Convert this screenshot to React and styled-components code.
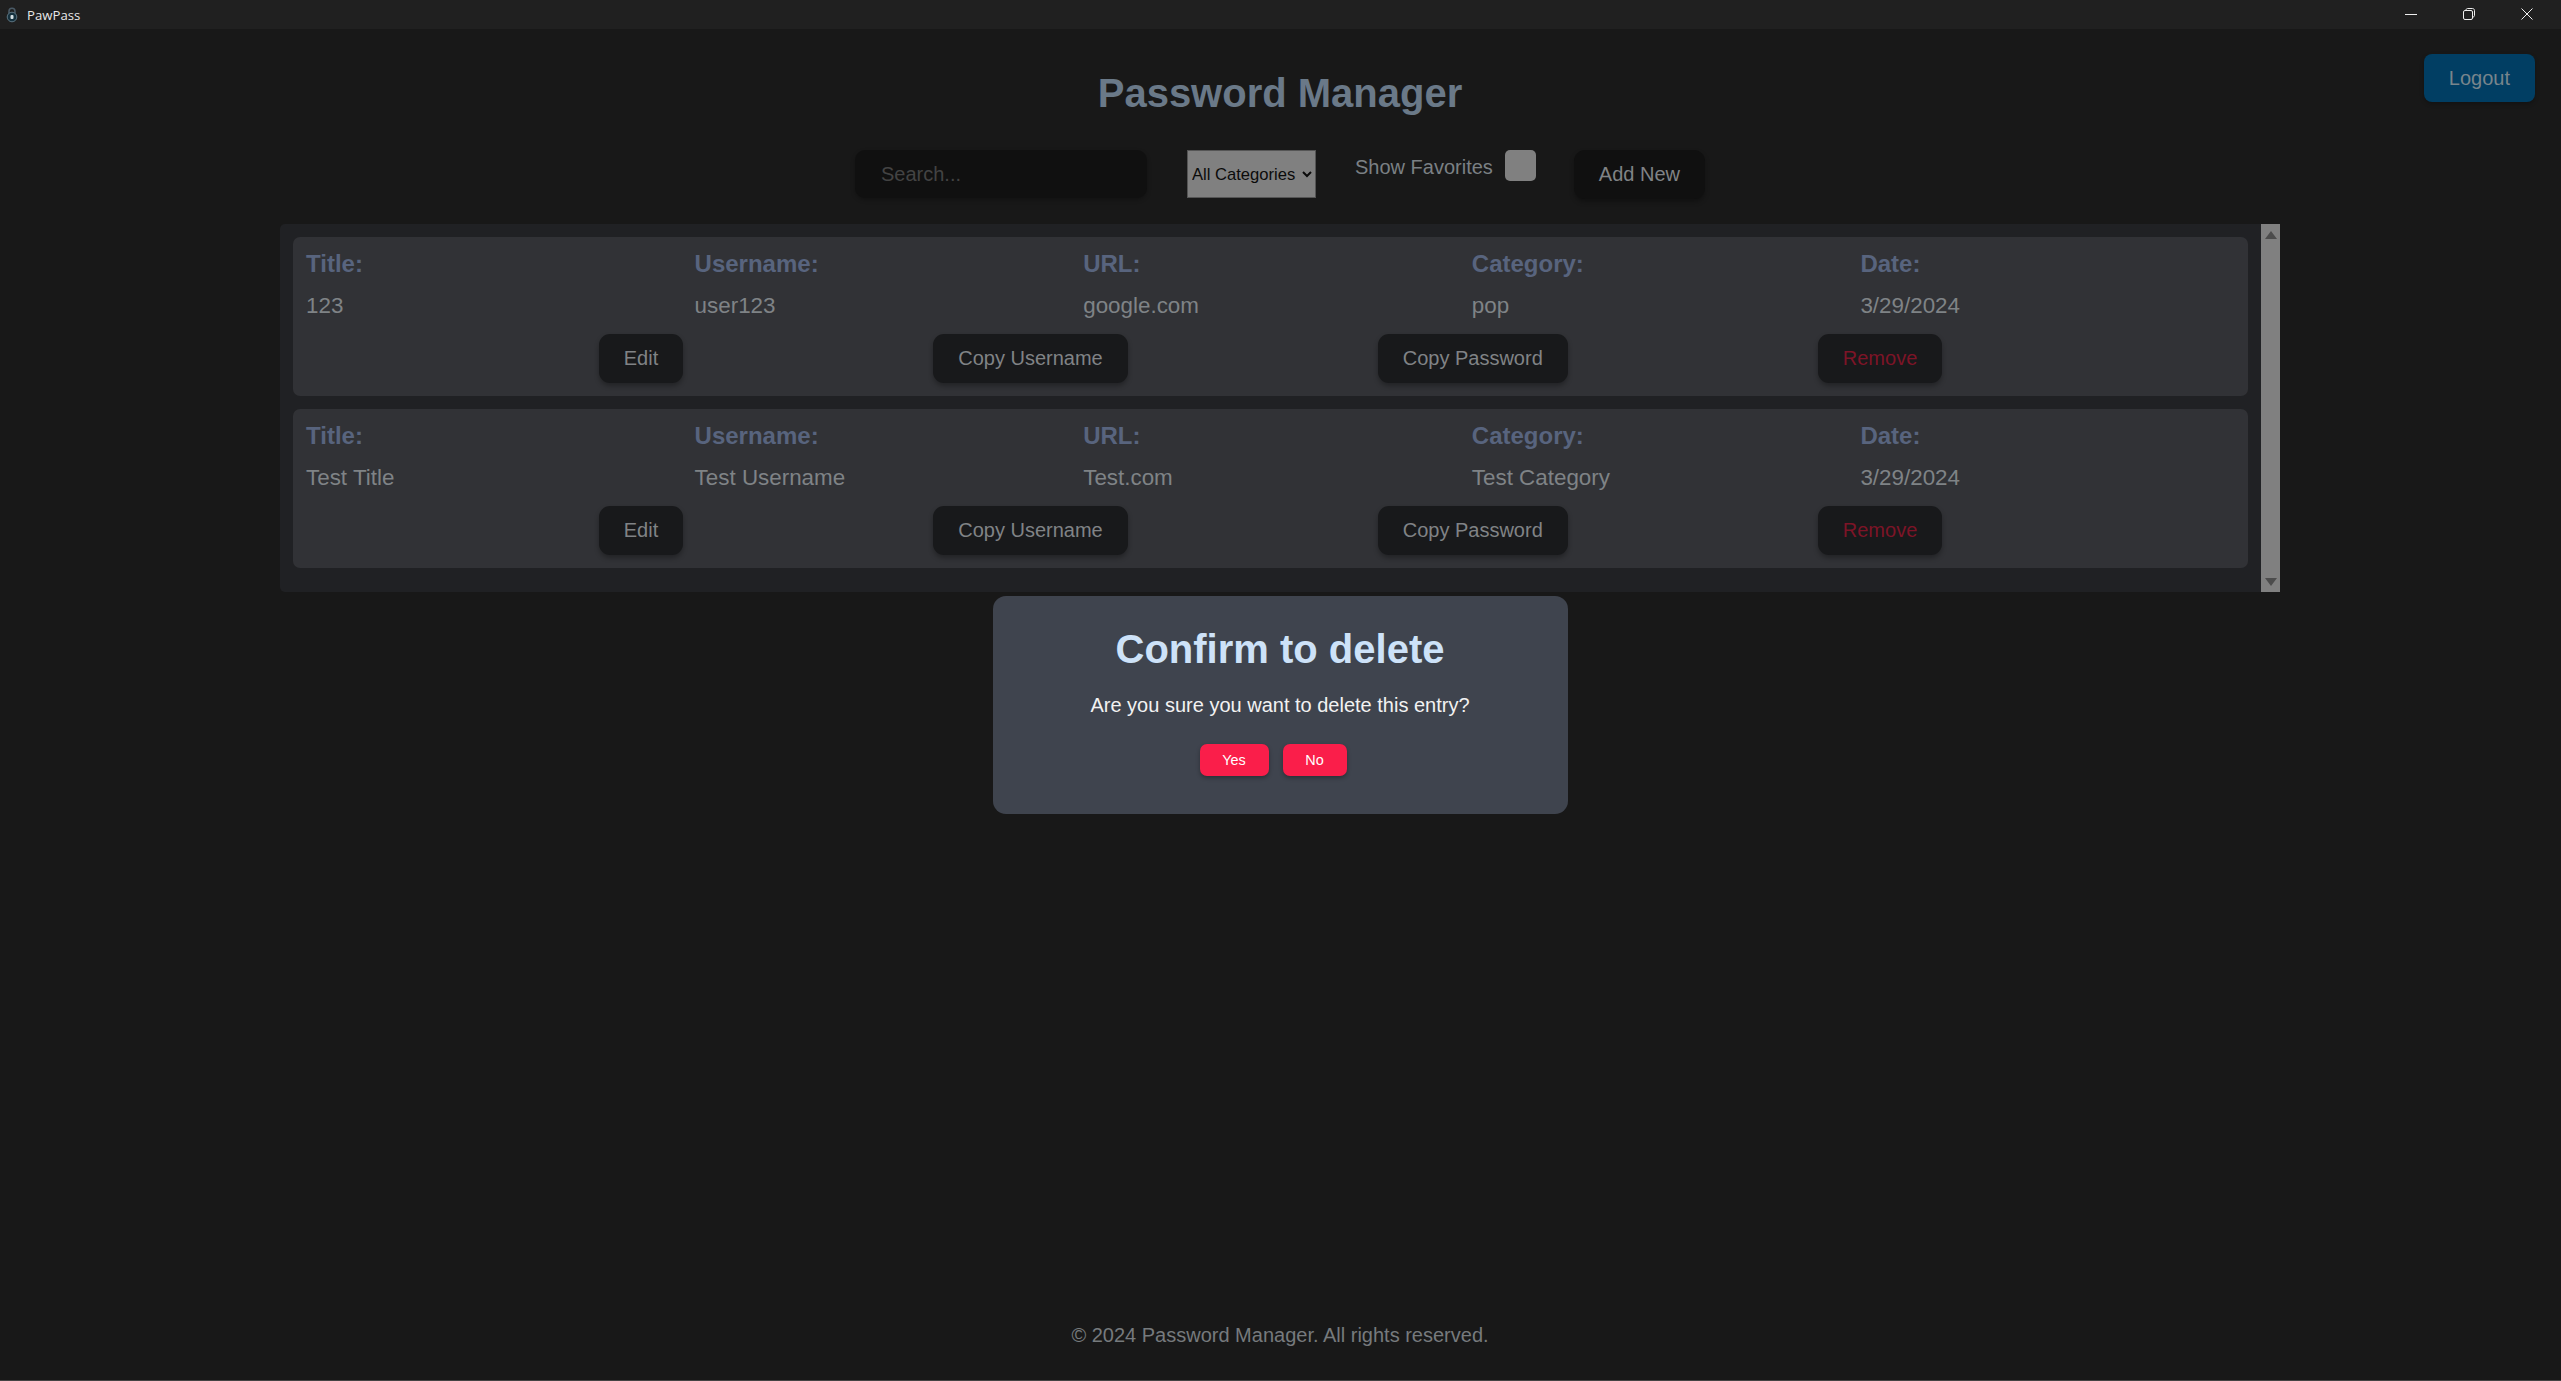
import React from "react";
import styled, { createGlobalStyle } from "styled-components";

const GlobalStyle = createGlobalStyle`
  html, body {
    margin: 0;
    height: 100%;
    background: #181818;
    font-family: "Liberation Sans", Arial, sans-serif;
  }
  * {
    box-sizing: border-box;
  }
`;

const Page = styled.div`
  display: flex;
  flex-direction: column;
  height: 100vh;
  overflow: hidden;
  background: #181818;
  border-bottom: 1px solid #444;
`;

const TitleBar = styled.div`
  display: flex;
  align-items: center;
  flex: none;
  height: 29px;
  padding: 0 5px 0 6px;
  background: #202020;
`;

const AppName = styled.span`
  margin-left: 9px;
  font-family: "Open Sans", sans-serif;
  font-size: 13.2px;
  color: #e8e8e8;
`;

const WindowControls = styled.div`
  display: flex;
  margin-left: auto;
  margin-bottom: 2px;
`;

const WindowButton = styled.div`
  display: flex;
  align-items: center;
  justify-content: center;
  width: 58px;
  height: 27px;
  color: #eee;
`;

const Main = styled.main`
  display: flex;
  flex: 1;
  flex-direction: column;
  align-items: center;
  padding-right: 1px;
`;

const Header = styled.header`
  display: grid;
  grid-template-columns: 1fr auto 1fr;
  width: 100%;
  height: 121px;
  padding-top: 25px;
`;

const Title = styled.h1`
  grid-column: 2;
  margin: 16px 0 0;
  font-size: 40px;
  line-height: 46px;
  font-weight: 700;
  color: #6a7988;
`;

const LogoutButton = styled.button`
  grid-column: 3;
  justify-self: end;
  align-self: start;
  height: 48px;
  margin-right: 25px;
  padding: 0 25px;
  border: none;
  border-radius: 8px;
  background: #013e63;
  box-shadow: 0 2px 4px rgba(0, 0, 0, 0.25);
  font: 20px "Liberation Sans", Arial, sans-serif;
  color: #78858c;
`;

const Toolbar = styled.div`
  display: flex;
  align-items: flex-start;
  height: 74px;
`;

const SearchInput = styled.input`
  width: 292px;
  height: 48px;
  margin-right: 40px;
  padding: 0 26px;
  border: none;
  border-radius: 10px;
  background: #101010;
  box-shadow: 0 2px 4px rgba(0, 0, 0, 0.25);
  font: 20px "Liberation Sans", Arial, sans-serif;
  color: #777;

  &::placeholder {
    color: #434343;
  }
`;

const CategorySelect = styled.select`
  width: 129px;
  height: 48px;
  margin-right: 39px;
  border: 1px solid #555;
  border-radius: 0;
  background: #808080;
  font: 16.6px "Liberation Sans", Arial, sans-serif;
  color: #0b0b0b;
`;

const FavoritesLabel = styled.label`
  margin-right: 12px;
  padding-top: 6px;
  font-size: 20px;
  line-height: 23px;
  color: #7b8084;
`;

const FavoritesBox = styled.span`
  width: 31px;
  height: 31px;
  margin-right: 38px;
  border-radius: 5px;
  background: #808080;
`;

const DarkButton = styled.button`
  height: 49px;
  padding: 0 25px;
  border: none;
  border-radius: 11px;
  background: ${(props) => props.$bg || "#18191b"};
  box-shadow: 0 3px 5px rgba(0, 0, 0, 0.3);
  font: 20px "Liberation Sans", Arial, sans-serif;
  color: ${(props) => (props.$danger ? "#7d1427" : "#808386")};
`;

const Panel = styled.section`
  display: flex;
  flex: none;
  width: 2000px;
  border-radius: 5px 0 0 5px;
  background: #202124;
`;

const EntryList = styled.div`
  flex: 1;
  padding: 13px 13px 12px;
`;

const ScrollTrack = styled.div`
  display: flex;
  flex: none;
  flex-direction: column;
  align-items: center;
  justify-content: space-between;
  width: 19px;
  padding: 7px 0 6px;
  background: #808080;
`;

const ScrollArrow = styled.span`
  width: 0;
  height: 0;
  border-left: 6px solid transparent;
  border-right: 6px solid transparent;
  border-${(props) => (props.$down ? "top" : "bottom")}: 8px solid #4c4c4c;
`;

const Entry = styled.article`
  margin-bottom: 12.5px;
  padding: 13px;
  border-radius: 7px;
  background: #313236;
`;

const Fields = styled.div`
  display: grid;
  grid-template-columns: repeat(5, 1fr);
  column-gap: 14px;
`;

const Field = styled.div`
  display: flex;
  flex-direction: column;
  row-gap: 15px;
`;

const FieldLabel = styled.span`
  font-size: 24px;
  line-height: 28px;
  font-weight: 700;
  color: #58647e;
`;

const FieldValue = styled.span`
  font-size: 22.4px;
  line-height: 26px;
  color: #7f8386;
`;

const Actions = styled.div`
  display: flex;
  justify-content: center;
  column-gap: 250px;
  margin-top: 15px;
`;

const Modal = styled.div`
  display: flex;
  flex: none;
  flex-direction: column;
  align-items: center;
  width: 575px;
  height: 218px;
  margin-top: 4px;
  padding-top: 28px;
  border-radius: 13px;
  background: #3f444e;
`;

const ModalTitle = styled.h2`
  margin: 0;
  font-size: 40px;
  line-height: 50px;
  font-weight: 700;
  color: #cde2f8;
`;

const ModalText = styled.p`
  margin: 20px 0 0;
  font-size: 20px;
  line-height: 23px;
  color: #f2f2f2;
`;

const ModalActions = styled.div`
  display: flex;
  margin-top: 27px;
`;

const ConfirmButton = styled.button`
  width: ${(props) => props.$width}px;
  height: 32px;
  margin-right: 14px;
  padding: 0;
  border: none;
  border-radius: 7px;
  background: #fa1e4a;
  box-shadow: 0 2px 4px rgba(0, 0, 0, 0.3);
  font: 14.4px "Liberation Sans", Arial, sans-serif;
  color: #fff;
`;

const Footer = styled.footer`
  margin-top: auto;
  padding-bottom: 33px;
  font-size: 20px;
  line-height: 23px;
  color: #767a7d;
`;

const entries = [
  { title: "123", username: "user123", url: "google.com", category: "pop", date: "3/29/2024" },
  { title: "Test Title", username: "Test Username", url: "Test.com", category: "Test Category", date: "3/29/2024" },
];

const columns = [
  ["Title:", "title"],
  ["Username:", "username"],
  ["URL:", "url"],
  ["Category:", "category"],
  ["Date:", "date"],
];

function AppIcon() {
  return (
    <svg width="12" height="16" viewBox="0 0 12 16" fill="none">
      <path d="M3 7V4.2C3 2.4 4.3 1.2 6 1.2S9 2.4 9 4.2V7" stroke="#4a5a66" strokeWidth="1.6" />
      <circle cx="6" cy="10" r="4.8" fill="#16323f" stroke="#5d7480" strokeWidth="1" />
      <rect x="4.5" y="8" width="3" height="4" rx="1" fill="#d6e0e4" />
    </svg>
  );
}

function EntryCard({ entry }) {
  return (
    <Entry>
      <Fields>
        {columns.map(([label, key]) => (
          <Field key={key}>
            <FieldLabel>{label}</FieldLabel>
            <FieldValue>{entry[key]}</FieldValue>
          </Field>
        ))}
      </Fields>
      <Actions>
        <DarkButton>Edit</DarkButton>
        <DarkButton>Copy Username</DarkButton>
        <DarkButton>Copy Password</DarkButton>
        <DarkButton $danger>Remove</DarkButton>
      </Actions>
    </Entry>
  );
}

export default function App() {
  return (
    <Page>
      <GlobalStyle />
      <TitleBar>
        <AppIcon />
        <AppName>PawPass</AppName>
        <WindowControls>
          <WindowButton>
            <svg width="12" height="12" viewBox="0 0 12 12" fill="none" stroke="currentColor">
              <path d="M0 6.5H12" />
            </svg>
          </WindowButton>
          <WindowButton>
            <svg width="12" height="12" viewBox="0 0 12 12" fill="none" stroke="currentColor">
              <rect x="0.5" y="2.5" width="9" height="9" rx="1.5" />
              <path d="M3 2.5V2C3 1.2 3.7 0.5 4.5 0.5H9.5C10.6 0.5 11.5 1.4 11.5 2.5V7.5C11.5 8.3 10.8 9 10 9" />
            </svg>
          </WindowButton>
          <WindowButton>
            <svg width="12" height="12" viewBox="0 0 12 12" fill="none" stroke="currentColor">
              <path d="M0.5 0.5L11.5 11.5M11.5 0.5L0.5 11.5" />
            </svg>
          </WindowButton>
        </WindowControls>
      </TitleBar>
      <Main>
        <Header>
          <Title>Password Manager</Title>
          <LogoutButton>Logout</LogoutButton>
        </Header>
        <Toolbar>
          <SearchInput placeholder="Search..." />
          <CategorySelect defaultValue="all">
            <option value="all">All Categories</option>
          </CategorySelect>
          <FavoritesLabel>Show Favorites</FavoritesLabel>
          <FavoritesBox />
          <DarkButton $bg="#101010">Add New</DarkButton>
        </Toolbar>
        <Panel>
          <EntryList>
            {entries.map((entry) => (
              <EntryCard key={entry.title} entry={entry} />
            ))}
          </EntryList>
          <ScrollTrack>
            <ScrollArrow />
            <ScrollArrow $down />
          </ScrollTrack>
        </Panel>
        <Modal>
          <ModalTitle>Confirm to delete</ModalTitle>
          <ModalText>Are you sure you want to delete this entry?</ModalText>
          <ModalActions>
            <ConfirmButton $width={69}>Yes</ConfirmButton>
            <ConfirmButton $width={64}>No</ConfirmButton>
          </ModalActions>
        </Modal>
        <Footer>© 2024 Password Manager. All rights reserved.</Footer>
      </Main>
    </Page>
  );
}
